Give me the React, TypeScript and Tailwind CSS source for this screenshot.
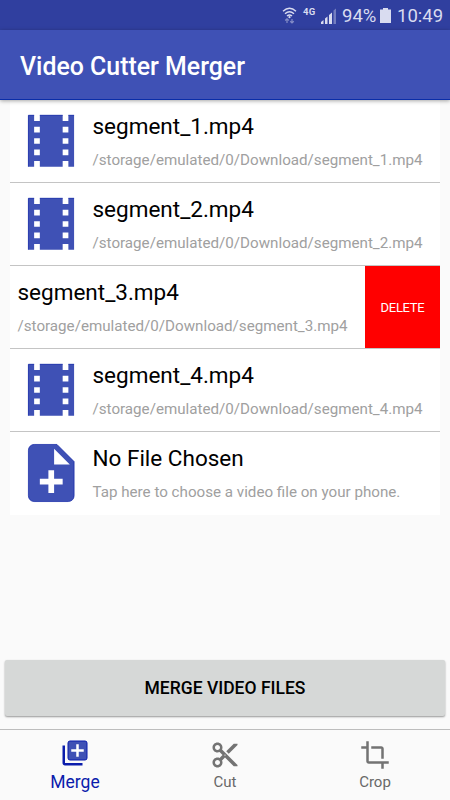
import type { ReactNode } from "react";

const BLUE = "#3f51b5";

const FilmIcon = () => (
  <svg viewBox="0 0 24 24" className="w-[70px] h-[70px]" fill={BLUE}>
    <path d="M18 3v2h-2V3H8v2H6V3H4v18h2v-2h2v2h8v-2h2v2h2V3h-2zM8 17H6v-2h2v2zm0-4H6v-2h2v2zm0-4H6V7h2v2zm10 8h-2v-2h2v2zm0-4h-2v-2h2v2zm0-4h-2V7h2v2z" />
    <path d="M4 21V3h2M8 3h8M18 3h2" fill="none" stroke="#1226a6" strokeWidth="0.3" />
  </svg>
);

const NoteAddIcon = () => (
  <svg viewBox="0 0 24 24" className="w-[70px] h-[70px]" fill={BLUE}>
    <path d="M14 2H6c-1.1 0-1.99.9-1.99 2L4 20c0 1.1.89 2 1.99 2H18c1.1 0 2-.9 2-2V8l-6-6zm2 14h-3v3h-2v-3H8v-2h3v-3h2v3h3v2zm-3-7V3.5L18.5 9H13z" />
    <path
      d="M14 2H6c-1.1 0-1.99.9-1.99 2L4 20c0 1.1.89 2 1.99 2H18c1.1 0 2-.9 2-2V8z"
      fill="none"
      stroke="#1226a6"
      strokeWidth="0.25"
    />
  </svg>
);

const MergeIcon = () => (
  <svg viewBox="0 0 24 24" className="w-[30px] h-[30px]">
    <path fill="#0a1cac" d="M4 6H2v14c0 1.1.9 2 2 2h14v-2H4V6z" />
    <rect x="6.4" y="2.4" width="15.2" height="15.2" rx="1.6" fill={BLUE} stroke="#0a1cac" strokeWidth="0.8" />
    <path fill="#fff" d="M19 11h-4v4h-2v-4H9V9h4V5h2v4h4v2z" />
  </svg>
);

const CutIcon = () => (
  <svg viewBox="0 0 24 24" className="w-[30px] h-[30px]" fill="#737373">
    <path d="M9.64 7.64c.23-.5.36-1.05.36-1.64 0-2.21-1.79-4-4-4S2 3.79 2 6s1.79 4 4 4c.59 0 1.14-.13 1.64-.36L10 12l-2.36 2.36C7.14 14.13 6.59 14 6 14c-2.21 0-4 1.79-4 4s1.79 4 4 4 4-1.79 4-4c0-.59-.13-1.14-.36-1.64L12 14l7 7h3v-1L9.64 7.64zM6 8c-1.1 0-2-.89-2-2s.9-2 2-2 2 .89 2 2-.9 2-2 2zm0 12c-1.1 0-2-.89-2-2s.9-2 2-2 2 .89 2 2-.9 2-2 2zm6-7.5c-.28 0-.5-.22-.5-.5s.22-.5.5-.5.5.22.5.5-.22.5-.5.5zM19 3l-6 6 2 2 7-7V3z" />
  </svg>
);

const CropIcon = () => (
  <svg viewBox="0 0 24 24" className="w-[30px] h-[30px]" fill="#737373">
    <path d="M17 15h2V7c0-1.1-.9-2-2-2H9v2h8v8zM7 17V1H5v4H1v2h4v10c0 1.1.9 2 2 2h10v4h2v-4h4v-2H7z" />
  </svg>
);

const StatusBar = () => (
  <div className="flex h-[30px] items-center bg-[#303f9f] pl-[282px] text-[#d9dcf0]">
    <svg viewBox="0 0 15 17" className="w-[15px] h-[17px]" fill="none" stroke="currentColor" strokeWidth="1.4">
      <path d="M1 4.2Q7.5-1.6 14 4.2M3 6.7Q7.5 2.6 12 6.7M5 9Q7.5 6.8 10 9" />
      <circle cx="7.5" cy="10.2" r="1.1" fill="currentColor" stroke="none" />
      <path d="M5 16v-4M3.2 13.5 5 11.8l1.8 1.7M10 12v4M8.2 14.3 10 16l1.8-1.7" strokeWidth="1.2" opacity="0.5" />
    </svg>
    <span className="ml-[6px] mb-[6px] w-[13px] text-[9.5px] leading-none font-bold tracking-[0.4px]">4G</span>
    <svg viewBox="0 0 16 16" className="ml-[5px] mt-[1px] w-4 h-4" fill="currentColor">
      <path d="M0 16v-2l2.5-2v4zM4 16v-5.5l2.5-2V16zM8 16V7l3-2.5V16z" />
      <path d="M12.5 16V2.5L15 .5V16z" opacity="0.4" />
    </svg>
    <span className="ml-[5px] mt-[2px] w-[35px] text-[18.5px] leading-none whitespace-nowrap">94%</span>
    <svg viewBox="0 0 11 15" className="ml-[3px] mt-[1px] w-[11px] h-[15px]" fill="currentColor">
      <path d="M3 0h5v1.5h3V15H0V1.5h3z" />
    </svg>
    <span className="ml-[6px] mt-[2px] text-[18.5px] leading-none">10:49</span>
  </div>
);

type RowProps = { icon?: ReactNode; title: string; subtitle: string; last?: boolean };

const FileRow = ({ icon, title, subtitle, last }: RowProps) => (
  <div className={`flex h-[83px] border-b ${last ? "border-white" : "border-[#c4c4c4]"}`}>
    {icon && <div className="flex w-[75px] shrink-0 items-center pl-[6.5px]">{icon}</div>}
    <div className="min-w-0 flex-1 pt-[11px] pl-[7.5px]">
      <div className="text-[22.5px] leading-[30px] text-black whitespace-nowrap">{title}</div>
      <div className="mt-[9px] text-[15.17px] leading-5 text-[#a0a0a0] whitespace-nowrap">{subtitle}</div>
    </div>
    {!icon && (
      <button className="w-[75px] shrink-0 bg-[#ff0000] pt-[1px] text-[13px] tracking-[-0.3px] text-white">DELETE</button>
    )}
  </div>
);

const files = [
  { name: "segment_1.mp4" },
  { name: "segment_2.mp4" },
  { name: "segment_3.mp4", swiped: true },
  { name: "segment_4.mp4" },
];

export default function App() {
  return (
    <div className="flex h-[800px] w-[450px] flex-col overflow-hidden bg-[#fafafa] font-['Roboto',sans-serif]">
      <StatusBar />

      <header className="relative z-10 flex h-[70px] shrink-0 items-center border-b border-[#0a2da8] bg-[#3f51b5] pl-5 shadow-[0_1px_4px_rgba(0,0,0,0.35)]">
        <h1 className="mt-[4px] text-[24.9px] leading-8 font-medium text-white">Video Cutter Merger</h1>
      </header>

      <main className="flex flex-1 flex-col">
        <div className="mx-[10px] bg-white">
          {files.map((f) => (
            <FileRow
              key={f.name}
              icon={f.swiped ? undefined : <FilmIcon />}
              title={f.name}
              subtitle={`/storage/emulated/0/Download/${f.name}`}
            />
          ))}
          <FileRow
            icon={<NoteAddIcon />}
            title="No File Chosen"
            subtitle="Tap here to choose a video file on your phone."
            last
          />
        </div>

        <button className="mx-[5px] mt-auto mb-[13px] h-[56px] rounded-[2px] bg-[#d6d8d7] text-[17.5px] font-medium text-black shadow-[0_1px_2px_rgba(0,0,0,0.4)]">
          MERGE VIDEO FILES
        </button>
      </main>

      {/* Bottom tabs */}
      <nav className="grid h-[71px] shrink-0 grid-cols-3 border-t border-[#bdbdbd]">
        <div className="flex flex-col items-center pt-[8px] text-[17.5px] leading-5 text-[#0a1cac]">
          <MergeIcon />
          <span className="mt-[4px]">Merge</span>
        </div>
        <div className="flex flex-col items-center pt-[10px] text-[15px] leading-5 text-[#686868]">
          <CutIcon />
          <span className="mt-[2px]">Cut</span>
        </div>
        <div className="flex flex-col items-center pt-[10px] text-[15px] leading-5 text-[#686868]">
          <CropIcon />
          <span className="mt-[2px]">Crop</span>
        </div>
      </nav>
    </div>
  );
}
